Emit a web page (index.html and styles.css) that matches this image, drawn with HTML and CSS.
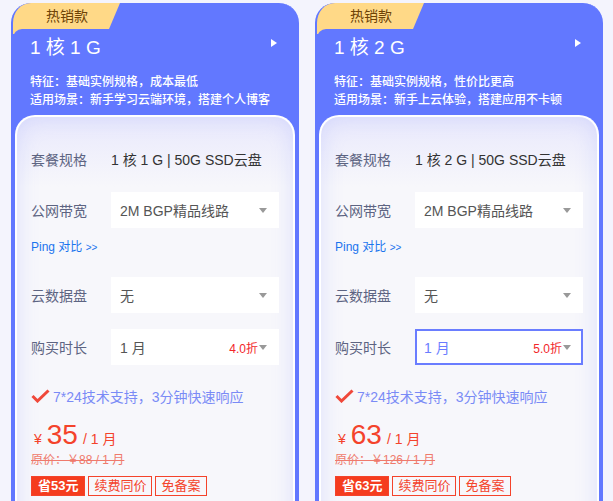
FILE: index.html
```html
<!DOCTYPE html>
<html lang="zh-CN">

<head>
    <meta charset="UTF-8">
    <meta name="viewport" content="width=device-width, initial-scale=1.0">
    <title>云服务器套餐</title>
    <link rel="stylesheet" href="styles.css">
</head>

<body>
    <div class="cards">
        <div class="card">
            <div class="badge"><span>热销款</span></div>
            <div class="head">
                <p class="title">1 核 1 G</p>
                <span class="arrow"></span>
            </div>
            <div class="features">
                <p>特征：基础实例规格，成本最低</p>
                <p>适用场景：新手学习云端环境，搭建个人博客</p>
            </div>
            <div class="panel">
                <div class="row">
                    <span class="label">套餐规格</span>
                    <span class="value">1 核 1 G | 50G SSD云盘</span>
                </div>
                <div class="row row-bw">
                    <span class="label">公网带宽</span>
                    <div class="select"><span>2M BGP精品线路</span><i class="caret"></i></div>
                </div>
                <a class="ping">Ping 对比 <small>&gt;&gt;</small></a>
                <div class="row row-disk">
                    <span class="label">云数据盘</span>
                    <div class="select"><span>无</span><i class="caret"></i></div>
                </div>
                <div class="row row-time">
                    <span class="label">购买时长</span>
                    <div class="select"><span>1 月</span><em>4.0折</em><i class="caret"></i></div>
                </div>
                <div class="support">
                    <svg width="19" height="14" viewBox="0 0 19 14"><path d="M1.5 7 L6.5 12 L17.5 1.5" fill="none" stroke="#f0483a" stroke-width="3"/></svg>
                    <span>7*24技术支持，3分钟快速响应</span>
                </div>
                <div class="price">
                    <span class="yen">¥</span><span class="num">35</span><span class="per">/ 1 月</span>
                </div>
                <p class="origin">原价：￥88 / 1 月</p>
                <div class="tags">
                    <span class="tag tag-save">省53元</span>
                    <span class="tag">续费同价</span>
                    <span class="tag">免备案</span>
                </div>
            </div>
        </div>

        <div class="card">
            <div class="badge"><span>热销款</span></div>
            <div class="head">
                <p class="title">1 核 2 G</p>
                <span class="arrow"></span>
            </div>
            <div class="features">
                <p>特征：基础实例规格，性价比更高</p>
                <p>适用场景：新手上云体验，搭建应用不卡顿</p>
            </div>
            <div class="panel">
                <div class="row">
                    <span class="label">套餐规格</span>
                    <span class="value">1 核 2 G | 50G SSD云盘</span>
                </div>
                <div class="row row-bw">
                    <span class="label">公网带宽</span>
                    <div class="select"><span>2M BGP精品线路</span><i class="caret"></i></div>
                </div>
                <a class="ping">Ping 对比 <small>&gt;&gt;</small></a>
                <div class="row row-disk">
                    <span class="label">云数据盘</span>
                    <div class="select"><span>无</span><i class="caret"></i></div>
                </div>
                <div class="row row-time">
                    <span class="label">购买时长</span>
                    <div class="select active"><span>1 月</span><em>5.0折</em><i class="caret"></i></div>
                </div>
                <div class="support">
                    <svg width="19" height="14" viewBox="0 0 19 14"><path d="M1.5 7 L6.5 12 L17.5 1.5" fill="none" stroke="#f0483a" stroke-width="3"/></svg>
                    <span>7*24技术支持，3分钟快速响应</span>
                </div>
                <div class="price">
                    <span class="yen">¥</span><span class="num">63</span><span class="per">/ 1 月</span>
                </div>
                <p class="origin">原价：￥126 / 1 月</p>
                <div class="tags">
                    <span class="tag tag-save">省63元</span>
                    <span class="tag">续费同价</span>
                    <span class="tag">免备案</span>
                </div>
            </div>
        </div>
    </div>
</body>

</html>
```

FILE: styles.css
```css
* {
    margin: 0;
    padding: 0;
    box-sizing: border-box;
}

body {
    font-family: "Liberation Sans", "Noto Sans CJK SC", sans-serif;
    background: #f4f4fd;
    overflow: hidden;
}

.cards {
    display: flex;
    gap: 16px;
    padding: 3px 0 0 11px;
}

.card {
    width: 288px;
    background: #6278ff;
    border: 2px solid #6278ff;
    border-top: none;
    border-radius: 20px 20px 0 0;
    overflow: hidden;
}

/* yellow tab in the top-left corner */
.badge {
    width: 109px;
    height: 31px;
    margin-left: -2px;
    background: #ffd987;
    clip-path: polygon(0 0, 100% 0, 88% 100%, 0 100%);
}

.badge span {
    display: block;
    padding-left: 35px;
    font-size: 14px;
    line-height: 26px;
    color: #6e4306;
}

.head {
    position: relative;
    margin-top: -5px;
    height: 33px;
    padding: 0 20px 0 17px;
    background: #6278ff;
    border-top-left-radius: 9px;
    display: flex;
    align-items: center;
    justify-content: space-between;
}

.title {
    font-size: 19px;
    color: #fff;
}

.arrow {
    width: 0;
    height: 0;
    border-left: 6px solid #fff;
    border-top: 4.5px solid transparent;
    border-bottom: 4.5px solid transparent;
    margin-top: -6px;
}

.features {
    padding: 11px 0 6px 17px;
}

.features p {
    font-size: 12px;
    line-height: 18px;
    color: #fff;
    font-weight: 500;
}

.panel {
    margin: 0 2px;
    min-height: 420px;
    padding: 24px 14px 20px 14px;
    border: 2px solid #fff;
    border-bottom: none;
    border-radius: 20px 20px 0 0;
    background: linear-gradient(#e9e9fc, #f7f7fb 70px);
    box-shadow: inset 0 0 22px rgba(140, 150, 255, 0.24);
}

.row {
    display: flex;
    align-items: center;
    height: 36px;
}

.row-bw {
    margin-top: 15px;
}

.row-disk {
    margin-top: 20px;
}

.row-time {
    margin-top: 16px;
}

.label {
    width: 80px;
    flex-shrink: 0;
    font-size: 14px;
    color: #5d6482;
}

.value {
    font-size: 14px;
    color: #333;
}

.select {
    flex: 1;
    height: 36px;
    background: #fff;
    display: flex;
    align-items: center;
    padding: 0 12px 0 9px;
    font-size: 14px;
    color: #555;
}

.select span {
    flex: 1;
}

.select em {
    font-style: normal;
    font-size: 12px;
    color: #f2262a;
    margin-right: 1px;
}

.select.active {
    border: 2px solid #6a7dff;
    padding: 0 10px 0 7px;
    color: #6a7dff;
}

.caret {
    width: 0;
    height: 0;
    border-top: 5px solid #999;
    border-left: 4.5px solid transparent;
    border-right: 4.5px solid transparent;
}

.ping {
    display: block;
    margin-top: 10px;
    font-size: 12px;
    line-height: 18px;
    color: #1a74ee;
}

.ping small {
    font-size: 10px;
}

.support {
    margin-top: 21px;
    height: 20px;
    display: flex;
    align-items: center;
    gap: 3px;
    font-size: 14px;
    color: #7a8bf6;
}

.price {
    margin-top: 13px;
    height: 32px;
    line-height: 32px;
    color: #f4432b;
}

.price .yen {
    font-size: 14px;
    margin: 0 5px 0 3px;
}

.price .num {
    font-size: 28px;
}

.price .per {
    font-size: 14px;
    margin-left: 5px;
}

.origin {
    margin-top: 1px;
    font-size: 12px;
    line-height: 16px;
    color: #ef7a6c;
    text-decoration: line-through;
}

.tags {
    margin-top: 8px;
    display: flex;
    gap: 3px;
}

.tag {
    height: 20px;
    padding: 0 5px;
    border: 1px solid #f4432b;
    font-size: 13px;
    line-height: 18px;
    color: #f4432b;
}

.tag-save {
    background: #f53c1e;
    color: #fff;
    font-weight: bold;
    padding: 0 6px;
}
```
